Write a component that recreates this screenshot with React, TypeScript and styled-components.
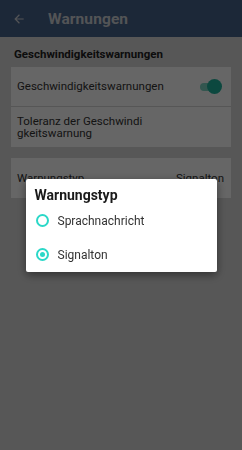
import React from "react";
import styled, { createGlobalStyle } from "styled-components";

const GlobalStyle = createGlobalStyle`
  html, body {
    margin: 0;
    padding: 0;
    background: #dadada;
    font-family: Roboto, "Liberation Sans", sans-serif;
  }
`;

const Page = styled.div`
  width: 242px;
  height: 450px;
  background: #dadada;
  display: flex;
  flex-direction: column;
`;

const Header = styled.div`
  height: 37px;
  background: #48648c;
  display: flex;
  align-items: center;
  padding: 0 0 0 12px;
  gap: 22px;
  flex-shrink: 0;
`;

const Title = styled.h1`
  margin: 0;
  font-size: 15.5px;
  font-weight: 700;
  color: #cfd3d8;
  letter-spacing: 0.1px;
`;

const Content = styled.div`
  padding: 0 11px;
  display: flex;
  flex-direction: column;
`;

const SectionLabel = styled.div`
  font-size: 11.5px;
  font-weight: 700;
  color: #222;
  padding: 5px 0 0 3px;
  height: 25px;
  line-height: 25px;
`;

const Card = styled.div<{ $gap?: number }>`
  background: #ffffff;
  margin-bottom: ${(p) => p.$gap ?? 0}px;
  display: flex;
  flex-direction: column;
`;

const Row = styled.div<{ $h: number; $divider?: boolean }>`
  height: ${(p) => p.$h}px;
  padding: 0 7px 0 6px;
  display: flex;
  align-items: center;
  justify-content: space-between;
  border-bottom: ${(p) => (p.$divider ? "1px solid #d6d6d6" : "none")};
  font-size: 11.5px;
  color: #333;
  line-height: 12.5px;
`;

const Value = styled.span`
  color: #333;
`;

const Toggle = styled.div`
  position: relative;
  width: 22px;
  height: 15px;
  margin-right: 2px;
  display: flex;
  align-items: center;
`;

const Track = styled.div`
  width: 20px;
  height: 8px;
  border-radius: 4px;
  background: #7fd6c6;
`;

const Thumb = styled.div`
  position: absolute;
  right: 0;
  top: 0;
  width: 15px;
  height: 15px;
  border-radius: 50%;
  background: #1fb39d;
`;

const Overlay = styled.div`
  position: fixed;
  inset: 0;
  background: rgba(0, 0, 0, 0.6);
  display: flex;
  align-items: center;
  justify-content: center;
`;

const Dialog = styled.div`
  width: 191px;
  height: 93px;
  background: #fff;
  border-radius: 2px;
  box-shadow: 0 3px 10px rgba(0, 0, 0, 0.45);
  padding-top: 7px;
  box-sizing: border-box;
`;

const DialogTitle = styled.div`
  font-size: 14px;
  font-weight: 700;
  color: #1a1a1a;
  line-height: 18px;
  padding-left: 9px;
`;

const Option = styled.div`
  height: 34px;
  display: flex;
  align-items: center;
  gap: 9px;
  padding-left: 10px;
  font-size: 12px;
  color: #333;
`;

const Radio = styled.span<{ $checked?: boolean }>`
  width: 13px;
  height: 13px;
  box-sizing: border-box;
  border-radius: 50%;
  border: 2px solid #2bd8c8;
  display: flex;
  align-items: center;
  justify-content: center;
  &::after {
    content: "";
    width: 5px;
    height: 5px;
    border-radius: 50%;
    background: ${(p) => (p.$checked ? "#2bd8c8" : "transparent")};
  }
`;

const BackArrow = () => (
  <svg width="14" height="14" viewBox="0 0 24 24">
    <path d="M20 11H7.83l5.59-5.59L12 4l-8 8 8 8 1.41-1.41L7.83 13H20v-2z" fill="#cfd3d8" />
  </svg>
);

export default function App() {
  return (
    <>
      <GlobalStyle />
      <Page>
        <Header>
          <BackArrow />
          <Title>Warnungen</Title>
        </Header>
        <Content>
          <SectionLabel>Geschwindigkeitswarnungen</SectionLabel>
          <Card $gap={11}>
            <Row $h={39} $divider>
              <span>Geschwindigkeitswarnungen</span>
              <Toggle>
                <Track />
                <Thumb />
              </Toggle>
            </Row>
            <Row $h={40}>
              <span>
                Toleranz der Geschwindi
                <br />
                gkeitswarnung
              </span>
            </Row>
          </Card>
          <Card>
            <Row $h={40}>
              <span>Warnungstyp</span>
              <Value>Signalton</Value>
            </Row>
          </Card>
        </Content>
        <Overlay>
          <Dialog>
            <DialogTitle>Warnungstyp</DialogTitle>
            <Option>
              <Radio />
              Sprachnachricht
            </Option>
            <Option>
              <Radio $checked />
              Signalton
            </Option>
          </Dialog>
        </Overlay>
      </Page>
    </>
  );
}
